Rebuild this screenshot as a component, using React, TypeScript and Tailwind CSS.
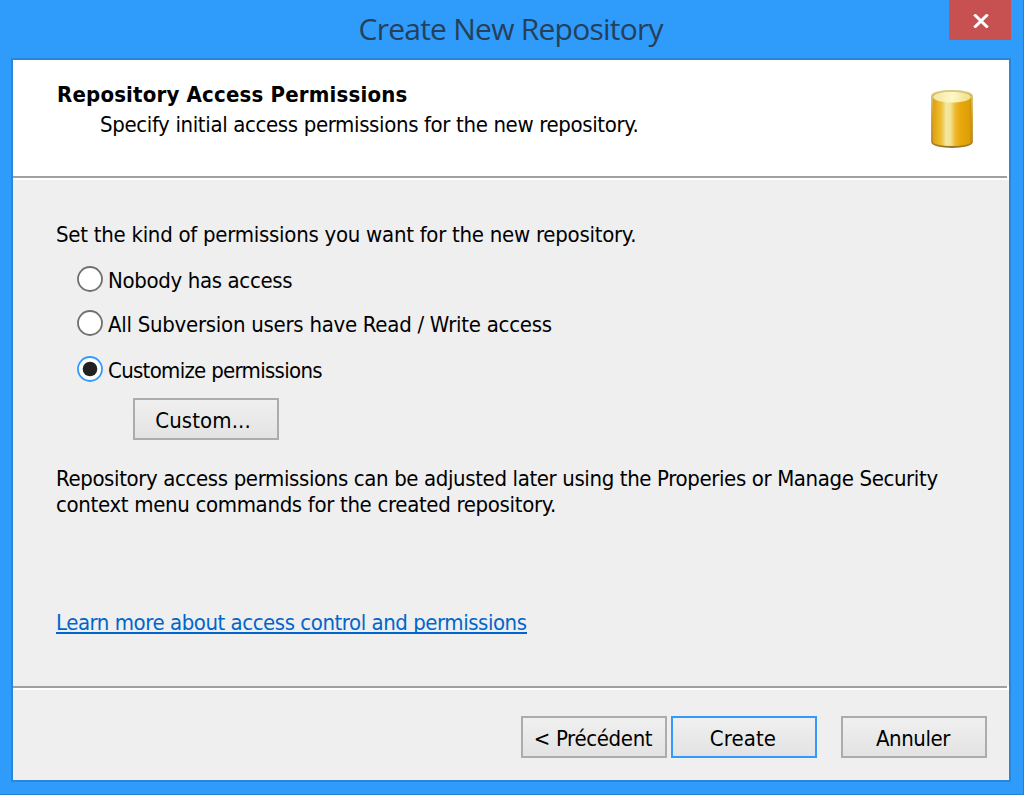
import type { ReactNode } from "react";

function Separator() {
  return (
    <div className="h-1 shrink-0 bg-white">
      <div className="mr-0.5 h-0.5 bg-[#a0a0a0]" />
    </div>
  );
}

function RadioOption({
  checked = false,
  className,
  children,
}: {
  checked?: boolean;
  className: string;
  children: ReactNode;
}) {
  return (
    <div role="radio" aria-checked={checked} className={`flex h-[26px] items-start gap-[5px] whitespace-nowrap ${className}`}>
      <svg viewBox="0 0 26 26" className="size-[26px] shrink-0">
        <circle cx="13" cy="13" r="12" fill="#ffffff" stroke={checked ? "#3399ff" : "#707070"} strokeWidth="1.8" />
        {checked && <circle cx="13" cy="13" r="7.3" fill="#212121" />}
      </svg>
      <span className="pt-0.5">{children}</span>
    </div>
  );
}

function Button({
  primary = false,
  className,
  children,
}: {
  primary?: boolean;
  className: string;
  children: ReactNode;
}) {
  return (
    <button
      className={`flex h-[42px] w-[146px] shrink-0 items-center justify-center border-2 bg-linear-to-b from-[#f0f0f0] to-[#e3e3e3] pt-[3px] whitespace-nowrap ${
        primary ? "border-[#3399ff]" : "border-[#acacac]"
      } ${className}`}
    >
      {children}
    </button>
  );
}

function RepositoryIcon() {
  return (
    <svg viewBox="0 0 42 58" className="h-[58px] w-[42px]">
      <defs>
        <linearGradient id="body" x1="0" x2="1" y1="0" y2="0">
          <stop offset="0" stopColor="#dc9c10" />
          <stop offset="0.13" stopColor="#e9b11c" />
          <stop offset="0.25" stopColor="#ecc344" />
          <stop offset="0.35" stopColor="#f3e9a0" />
          <stop offset="0.46" stopColor="#f3e391" />
          <stop offset="0.58" stopColor="#efb930" />
          <stop offset="0.72" stopColor="#e8a70b" />
          <stop offset="0.93" stopColor="#dda005" />
          <stop offset="1" stopColor="#b98517" />
        </linearGradient>
        <linearGradient id="lid" x1="0" x2="1" y1="0" y2="0">
          <stop offset="0" stopColor="#f2e5a0" />
          <stop offset="0.5" stopColor="#fcf8c8" />
          <stop offset="1" stopColor="#f1dd86" />
        </linearGradient>
        <linearGradient id="rim" x1="0" x2="0" y1="0" y2="1">
          <stop offset="0" stopColor="#d8c987" />
          <stop offset="0.5" stopColor="#cf9c24" />
          <stop offset="0.9" stopColor="#b98a2c" />
          <stop offset="1" stopColor="#98752c" />
        </linearGradient>
      </defs>
      <path d="M1 6C1 3 10 1 21 1s20 2 20 5v46c0 3-9 5-20 5S1 55 1 52Z" fill="url(#body)" stroke="url(#rim)" strokeWidth="1.8" />
      <path d="M2 7c0-3 8-5 19-5s19 2 19 5-8 5.500-19 5.500S2 10 2 7Z" fill="url(#lid)" />
    </svg>
  );
}

export default function App() {
  return (
    <div className="flex h-[795px] w-[1024px] flex-col overflow-hidden border-r border-b border-[#2a7ccb] bg-[#2f9bfa] font-['DejaVu_Sans_Condensed','DejaVu_Sans',sans-serif] text-[22px] leading-[26px] text-black">
      <div className="grid h-[58px] shrink-0 grid-cols-[1fr_306px_1fr] items-start">
        <div />
        <h1 className="pt-[9px] font-['Open_Sans',sans-serif] text-[30px] leading-[40px] font-normal tracking-[-0.75px] whitespace-nowrap text-[#26405a]">
          Create New Repository
        </h1>
        <button aria-label="Close" className="mr-3 flex h-10 w-[62px] items-center justify-center justify-self-end bg-[#c75050] pt-0.5 pl-0.5">
          <svg viewBox="0 0 16 14" className="h-[14px] w-4">
            <path d="M1.300 .5 14.700 13.500M14.700 .5 1.300 13.500" fill="none" stroke="#ffffff" strokeWidth="3" />
          </svg>
        </button>
      </div>

      <div className="ml-[11px] flex h-[724px] w-[1000px] flex-col border-2 border-[#2a86d9] bg-[#efefef]">
        <header className="flex h-[116px] shrink-0 items-start justify-between bg-white pr-9 pl-11 whitespace-nowrap">
          <div className="pt-[22px]">
            <h2 className="font-bold tracking-[0.18px]">Repository Access Permissions</h2>
            <p className="mt-1 ml-[43px] tracking-[-0.36px]">Specify initial access permissions for the new repository.</p>
          </div>
          <div className="pt-[30px]">
            <RepositoryIcon />
          </div>
        </header>
        <Separator />

        <main className="flex h-[506px] shrink-0 flex-col items-start pt-[42px] pl-[43px]">
          <p className="tracking-[-0.265px] whitespace-nowrap">Set the kind of permissions you want for the new repository.</p>
          <div role="radiogroup" className="mt-[18px] ml-[21px]">
            <RadioOption className="tracking-[-0.35px]">Nobody has access</RadioOption>
            <RadioOption className="mt-[18px] tracking-[-0.27px]">All Subversion users have Read / Write access</RadioOption>
            <RadioOption checked className="mt-5 tracking-[-0.7px]">
              Customize permissions
            </RadioOption>
          </div>
          <Button className="mt-4 ml-[77px] pr-1.5 tracking-[0.1px]">Custom...</Button>
          <p className="mt-[26px] whitespace-nowrap">
            <span className="block tracking-[-0.375px]">
              Repository access permissions can be adjusted later using the Properies or Manage Security
            </span>
            <span className="block tracking-[-0.33px]">context menu commands for the created repository.</span>
          </p>
          <a className="mt-[92px] h-6 border-b-2 border-[#0066cc] leading-[26px] tracking-[-0.46px] whitespace-nowrap text-[#0066cc]">
            Learn more about access control and permissions
          </a>
        </main>
        <Separator />

        <footer className="flex flex-1 items-start justify-end pt-[26px] pr-[22px]">
          <Button className="pr-0.5 tracking-[-0.35px]">&lt; Précédent</Button>
          <Button primary className="ml-1 pr-0.5 tracking-[0.1px]">
            Create
          </Button>
          <Button className="ml-6 pr-0.5 tracking-[-0.4px]">Annuler</Button>
        </footer>
      </div>
    </div>
  );
}
